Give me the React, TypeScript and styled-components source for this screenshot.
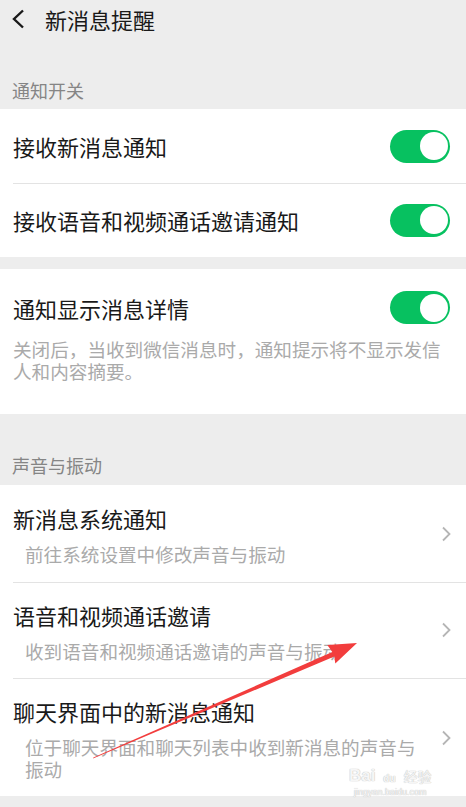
import styled, {createGlobalStyle} from "styled-components"

const GlobalStyle = createGlobalStyle`
    * {
        box-sizing: border-box;
    }
    body {
        margin: 0;
        background: #ededed;
        font-family: "Noto Sans CJK SC", "Noto Sans", sans-serif;
    }
`

const Page = styled.div`
    position: relative;
    width: 466px;
    min-height: 807px;
    background: #ededed;
    overflow: hidden;
`

const NavBar = styled.div`
    height: 38px;
    display: flex;
    align-items: center;
    padding-left: 11px;
    gap: 20px;
    color: #191919;
    font-size: 22px;
`

const SectionTitle = styled.div<{top: number; bottom: number}>`
    padding: ${(p) => p.top}px 12px ${(p) => p.bottom}px;
    font-size: 18px;
    line-height: 24px;
    color: #858585;
`

const Group = styled.div`
    background: #fff;
`

const GroupGap = styled.div`
    height: 12px;
`

const SwitchRow = styled.div`
    height: 74px;
    display: flex;
    align-items: center;
    justify-content: space-between;
    padding: 0 16px 0 13px;
    position: relative;

    & + &::before {
        content: "";
        position: absolute;
        left: 13px;
        right: 0;
        top: 0;
        height: 1px;
        background: #e3e3e3;
    }
`

const Title = styled.div`
    font-size: 22px;
    line-height: 30px;
    color: #191919;
`

const DetailBlock = styled.div`
    padding: 22px 16px 33px 13px;
`

const DetailHead = styled.div`
    display: flex;
    align-items: center;
    justify-content: space-between;
`

const Desc = styled.div<{indent?: number}>`
    margin-top: ${(p) => (p.indent ? 10 : 14)}px;
    padding-left: ${(p) => p.indent || 0}px;
    font-size: 18.6px;
    line-height: 21.5px;
    color: #aaaaaa;
`

const Toggle = styled.div`
    width: 60px;
    height: 33px;
    border-radius: 17px;
    background: #07c160;
    padding: 2.5px;
    display: flex;
    justify-content: flex-end;

    &::after {
        content: "";
        width: 28px;
        height: 28px;
        border-radius: 50%;
        background: #fff;
    }
`

const LinkRow = styled.div`
    display: flex;
    align-items: center;
    padding: 18px 14px 17px 13px;
    gap: 20px;
    position: relative;

    & + &::before {
        content: "";
        position: absolute;
        left: 13px;
        right: 0;
        top: 0;
        height: 1px;
        background: #e3e3e3;
    }
`

const LinkBody = styled.div`
    flex: 1;
`

const Watermark = styled.div`
    position: absolute;
    left: 349px;
    top: 765px;
    display: flex;
    flex-direction: column;
    align-items: center;
    color: #f6f6f6;
    font-family: "Liberation Sans", sans-serif;
    text-shadow: 0 0 1px #c4c4c4, 0 0 1px #c4c4c4;
    pointer-events: none;
`

const MarkLine = styled.div`
    display: flex;
    align-items: flex-end;
    font-size: 17px;
    font-weight: bold;
    line-height: 18px;
`

const Paw = styled.span`
    position: relative;
    width: 24px;
    height: 20px;
    margin: 0 2px;
    display: flex;
    align-items: flex-end;
    justify-content: center;
    font-size: 10px;
    line-height: 13px;

    svg {
        position: absolute;
        left: 0;
        top: 0;
        z-index: -1;
    }
`

const MarkCn = styled.span`
    font-family: "Noto Sans CJK SC", sans-serif;
    font-size: 14px;
    font-weight: normal;
`

const MarkUrl = styled.div`
    font-size: 9px;
    line-height: 12px;
    margin-top: 1px;
`

const ArrowLayer = styled.svg`
    position: absolute;
    left: 0;
    top: 0;
    pointer-events: none;
`

const BackIcon = () => (
    <svg width="14" height="20" viewBox="0 0 14 20">
        <path d="M12 1.5 L3 10 L12 18.5" fill="none" stroke="#191919" strokeWidth="2.4" />
    </svg>
)

const Chevron = () => (
    <svg width="12" height="16" viewBox="0 0 12 16">
        <path d="M3 1.5 L9.5 8 L3 14.5" fill="none" stroke="#b5b5b5" strokeWidth="1.8" />
    </svg>
)

const PawShape = () => (
    <svg width="24" height="20" viewBox="0 0 24 20">
        <g fill="#f6f6f6" stroke="#c4c4c4" strokeWidth="0.8">
            <circle cx="5" cy="6.5" r="2.3" />
            <circle cx="9.5" cy="3" r="2.3" />
            <circle cx="14.5" cy="3" r="2.3" />
            <circle cx="19" cy="6.5" r="2.3" />
            <ellipse cx="12" cy="14" rx="8.5" ry="5.5" />
        </g>
    </svg>
)

const soundRows = [
    {title: "新消息系统通知", desc: "前往系统设置中修改声音与振动"},
    {title: "语音和视频通话邀请", desc: "收到语音和视频通话邀请的声音与振动"},
    {title: "聊天界面中的新消息通知", desc: "位于聊天界面和聊天列表中收到新消息的声音与振动"},
]

export default function App() {
    return (
        <Page>
            <GlobalStyle />
            <NavBar>
                <BackIcon />
                <span>新消息提醒</span>
            </NavBar>

            <SectionTitle top={40} bottom={7}>通知开关</SectionTitle>
            <Group>
                <SwitchRow>
                    <Title>接收新消息通知</Title>
                    <Toggle />
                </SwitchRow>
                <SwitchRow>
                    <Title>接收语音和视频通话邀请通知</Title>
                    <Toggle />
                </SwitchRow>
            </Group>

            <GroupGap />
            <Group>
                <DetailBlock>
                    <DetailHead>
                        <Title>通知显示消息详情</Title>
                        <Toggle />
                    </DetailHead>
                    <Desc>关闭后，当收到微信消息时，通知提示将不显示发信人和内容摘要。</Desc>
                </DetailBlock>
            </Group>

            <SectionTitle top={39} bottom={8}>声音与振动</SectionTitle>
            <Group>
                {soundRows.map((row) => (
                    <LinkRow key={row.title}>
                        <LinkBody>
                            <Title>{row.title}</Title>
                            <Desc indent={12}>{row.desc}</Desc>
                        </LinkBody>
                        <Chevron />
                    </LinkRow>
                ))}
            </Group>

            <Watermark>
                <MarkLine>
                    <span>Bai</span>
                    <Paw>
                        <PawShape />
                        du
                    </Paw>
                    <MarkCn>经验</MarkCn>
                </MarkLine>
                <MarkUrl>jingyan.baidu.com</MarkUrl>
            </Watermark>

            <ArrowLayer width="466" height="807" viewBox="0 0 466 807">
                <polygon
                    points="93,758.5 93.4,757.5 332.3,651.9 327.3,645 357,643 335.3,663.4 334.3,656.5"
                    fill="#f23d3d"
                />
            </ArrowLayer>
        </Page>
    )
}
